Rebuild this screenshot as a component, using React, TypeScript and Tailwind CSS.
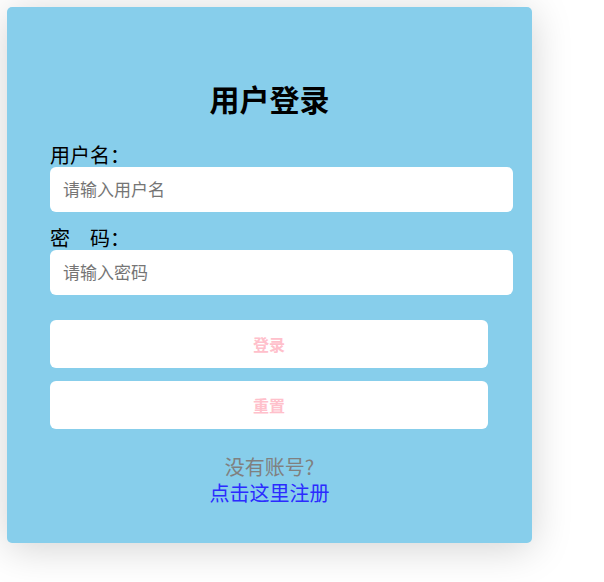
export default function App() {
  return (
    <div
      className="min-h-screen bg-white pl-[7px] pt-[7px]"
      style={{ fontFamily: '"Noto Sans CJK SC", "Noto Sans", sans-serif' }}
    >
      {/* Login card */}
      <div className="w-[525px] rounded-[5px] bg-[#87ceeb] px-[43px] pb-[37px] pt-[73px] shadow-[0_5px_40px_rgba(0,0,0,0.18)]">
        <h2 className="text-center text-[30px] font-bold leading-[36px] text-black">用户登录</h2>

        <div className="mt-[27px]">
          <label className="block text-[20px] leading-6 text-black">用户名：</label>
          <input
            type="text"
            placeholder="请输入用户名"
            className="h-[45px] w-[463px] rounded-[6px] bg-white px-[13px] pb-[3px] text-[17px] text-black outline-none placeholder:text-[#757575]"
          />
        </div>

        <div className="mt-[14px]">
          <label className="block text-[20px] leading-6 text-black">密　码：</label>
          <input
            type="password"
            placeholder="请输入密码"
            className="h-[45px] w-[463px] rounded-[6px] bg-white px-[13px] pb-[3px] text-[17px] text-black outline-none placeholder:text-[#757575]"
          />
        </div>

        {/* Buttons */}
        <div className="mt-[25px] flex flex-col gap-[13px]">
          <button className="h-[48px] w-[438px] rounded-[6px] bg-white text-[16px] font-bold text-[#ffc0cb]">
            登录
          </button>
          <button className="h-[48px] w-[438px] rounded-[6px] bg-white text-[16px] font-bold text-[#ffc0cb]">
            重置
          </button>
        </div>

        <div className="mt-[25px] text-center text-[20px] leading-[26px]">
          <p className="text-[#808080]">没有账号?</p>
          <a href="#" className="block text-[#2b2bff]">
            点击这里注册
          </a>
        </div>
      </div>
    </div>
  );
}
